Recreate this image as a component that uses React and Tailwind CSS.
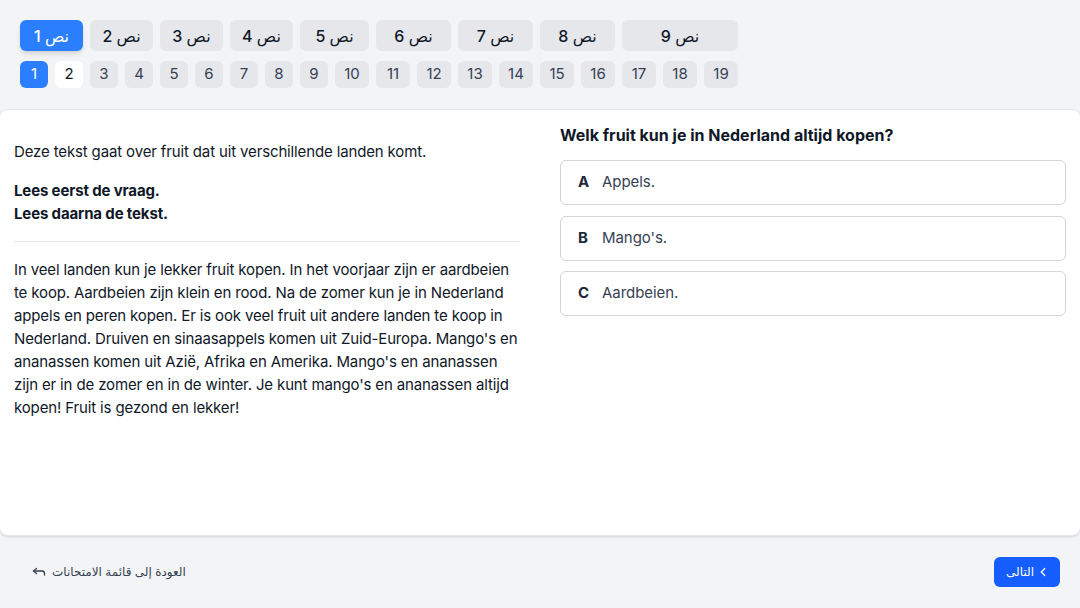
// Exam reading page: text tabs with question numbers, reading text + question, footer nav

const groups = [
  { label: "نص 1", questions: [1, 2] },
  { label: "نص 2", questions: [3, 4] },
  { label: "نص 3", questions: [5, 6] },
  { label: "نص 4", questions: [7, 8] },
  { label: "نص 5", questions: [9, 10] },
  { label: "نص 6", questions: [11, 12] },
  { label: "نص 7", questions: [13, 14] },
  { label: "نص 8", questions: [15, 16] },
  { label: "نص 9", questions: [17, 18, 19] },
];

const options = [
  { letter: "A", text: "Appels." },
  { letter: "B", text: "Mango's." },
  { letter: "C", text: "Aardbeien." },
];

const BackIcon = () => (
  <svg
    width="14"
    height="10"
    viewBox="0 0 14 10"
    fill="none"
    stroke="currentColor"
    strokeWidth="1.3"
    strokeLinecap="round"
    strokeLinejoin="round"
  >
    <path d="M4.5 1.5 1.5 4l3 2.5" />
    <path d="M1.5 4h8.5a2.5 2.5 0 0 1 2.5 2.5V8" />
  </svg>
);

const ChevronLeft = () => (
  <svg
    width="14"
    height="14"
    viewBox="0 0 24 24"
    fill="none"
    stroke="currentColor"
    strokeWidth="2.2"
    strokeLinecap="round"
    strokeLinejoin="round"
  >
    <path d="m15 18-6-6 6-6" />
  </svg>
);

const App = () => {
  const activeText = 0;
  const activeQuestion = 1;
  const visited = [2];

  const numberClass = (q) => {
    const width = q > 9 ? "w-[34px]" : "w-[28px]";
    if (q === activeQuestion) {
      return `${width} h-[27px] rounded-md bg-blue-500 text-[15px] text-white`;
    }
    if (visited.includes(q)) {
      return `${width} h-[27px] rounded-md bg-white text-[15px] text-gray-900`;
    }
    return `${width} h-[27px] rounded-md bg-gray-200 text-[15px] text-gray-700`;
  };

  return (
    <div className="flex h-screen flex-col bg-gray-100 font-['Inter','DejaVu_Sans',sans-serif] text-gray-900">
      <nav className="flex gap-[7px] px-5 pb-[21px] pt-5">
        {groups.map((group, i) => (
          <div key={group.label} className="flex flex-col gap-2.5">
            <button
              type="button"
              className={
                i === activeText
                  ? "h-[31px] w-full rounded-md bg-blue-500 text-[16px] font-medium text-white shadow-md"
                  : "h-[31px] w-full rounded-md bg-gray-200 text-[16px] font-medium text-gray-900"
              }
            >
              {group.label}
            </button>
            <div className="flex gap-[7px]">
              {group.questions.map((q) => (
                <button key={q} type="button" className={numberClass(q)}>
                  {q}
                </button>
              ))}
            </div>
          </div>
        ))}
      </nav>

      <main className="grid flex-1 grid-cols-2 gap-10 rounded-lg border-y border-gray-200 bg-white px-3.5 shadow-sm">
        <section className="pt-[30px] text-[15px] leading-[23px] tracking-[-0.14px] text-gray-900">
          <p>Deze tekst gaat over fruit dat uit verschillende landen komt.</p>
          <p className="mt-4 font-bold">
            Lees eerst de vraag.
            <br />
            Lees daarna de tekst.
          </p>
          <hr className="my-4 border-gray-200" />
          <p>
            In veel landen kun je lekker fruit kopen. In het voorjaar zijn er
            aardbeien te koop. Aardbeien zijn klein en rood. Na de zomer kun je
            in Nederland appels en peren kopen. Er is ook veel fruit uit andere
            landen te koop in Nederland. Druiven en sinaasappels komen uit
            Zuid-Europa. Mango's en ananassen komen uit Azië, Afrika en Amerika.
            Mango's en ananassen zijn er in de zomer en in de winter. Je kunt
            mango's en ananassen altijd kopen! Fruit is gezond en lekker!
          </p>
        </section>

        <section className="pt-[11px]">
          <h2 className="text-[16px] font-bold leading-7 text-gray-900">
            Welk fruit kun je in Nederland altijd kopen?
          </h2>
          <div className="mt-[11px] flex flex-col gap-[10.5px]">
            {options.map((option) => (
              <button
                key={option.letter}
                type="button"
                className="flex h-[45px] items-center gap-[13px] rounded-md border border-gray-300 bg-white pl-[17px] text-left text-[15px] tracking-[-0.05px]"
              >
                <span className="w-[11px] font-bold text-gray-800">
                  {option.letter}
                </span>
                <span className="text-gray-700">{option.text}</span>
              </button>
            ))}
          </div>
        </section>
      </main>

      <footer className="flex h-[72px] shrink-0 items-center justify-between px-5">
        <button
          type="button"
          className="flex items-center gap-1.5 px-3 py-1.5 text-[12px] text-gray-700"
        >
          <BackIcon />
          <span dir="rtl">العودة إلى قائمة الامتحانات</span>
        </button>
        <button
          type="button"
          className="flex h-[30px] items-center gap-0.5 rounded-md bg-blue-600 pl-3 pr-2.5 text-[12px] text-white"
        >
          <span dir="rtl">التالى</span>
          <ChevronLeft />
        </button>
      </footer>
    </div>
  );
};

export default App;
